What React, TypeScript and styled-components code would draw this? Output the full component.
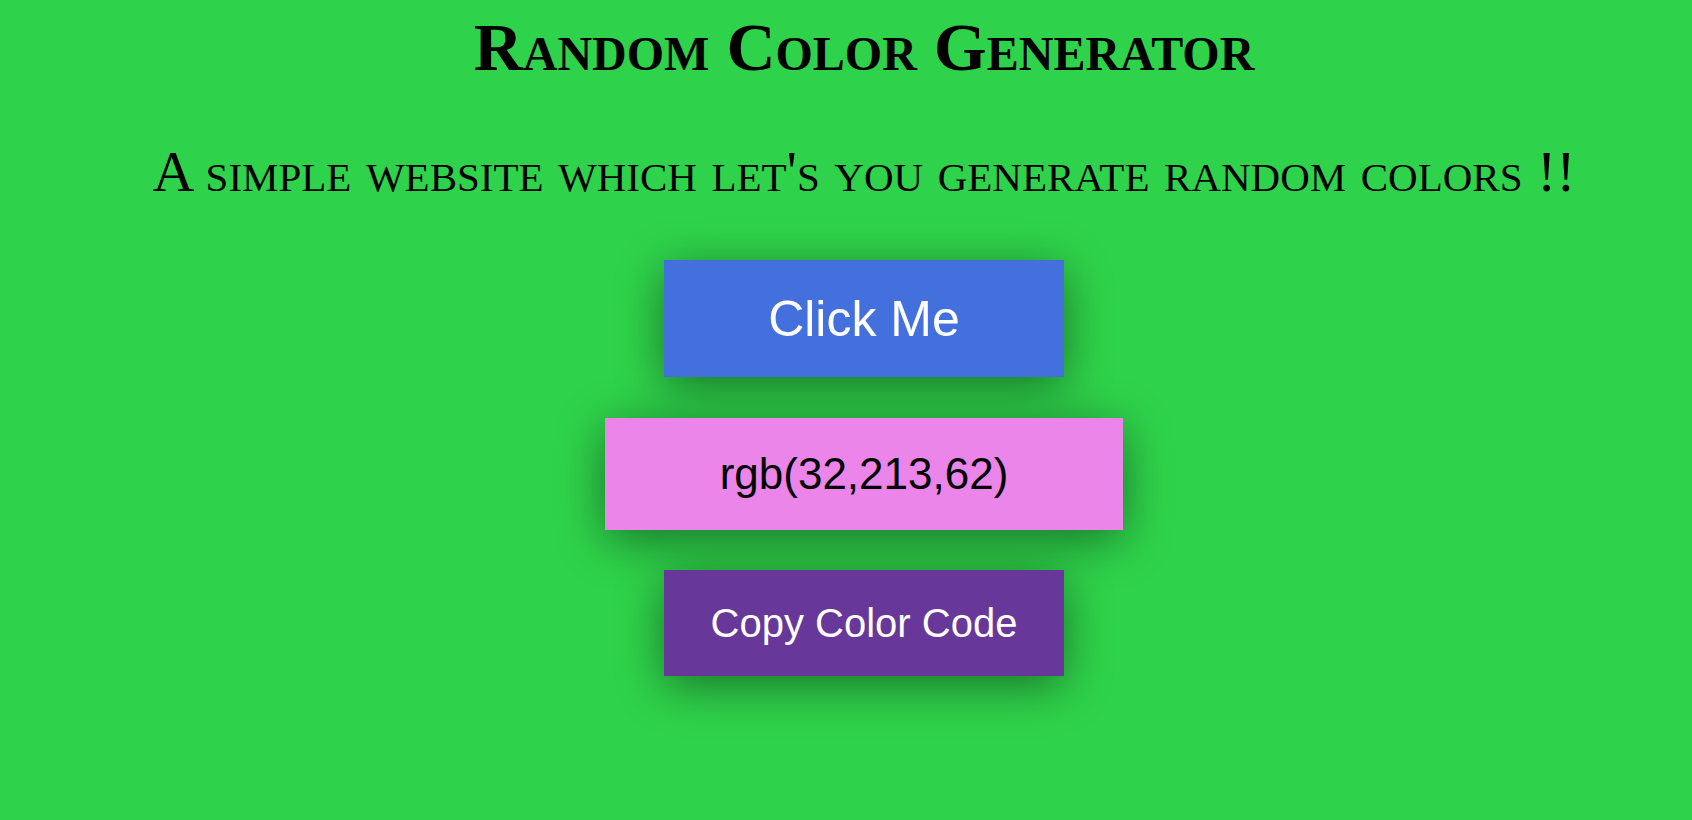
import React from "react";
import styled, { createGlobalStyle } from "styled-components";

const GlobalStyle = createGlobalStyle`
  html, body {
    margin: 0;
    padding: 0;
    background: #2fd34b;
  }
  body {
    font-family: "Liberation Serif", "Times New Roman", serif;
  }
`;

const Page = styled.main`
  box-sizing: border-box;
  width: 100%;
  min-height: 820px;
  padding: 7px 0 0 36px;
  display: flex;
  flex-direction: column;
  align-items: center;
  background: #2fd34b;
`;

const Title = styled.h1`
  margin: 0;
  font-family: "Liberation Serif", "Times New Roman", serif;
  font-size: 68px;
  line-height: 80px;
  font-weight: 700;
  font-variant: small-caps;
  color: #000;
  text-align: center;
  white-space: nowrap;
`;

const Subtitle = styled.h2`
  margin: 50px 0 0;
  font-family: "Liberation Serif", "Times New Roman", serif;
  font-size: 58px;
  line-height: 70px;
  font-weight: 400;
  font-variant: small-caps;
  color: #000;
  text-align: center;
  white-space: nowrap;
`;

const Controls = styled.div`
  margin-top: 53px;
  display: flex;
  flex-direction: column;
  align-items: center;
  gap: 40px;
`;

const Block = styled.div<{ $w: number; $h: number; $bg: string; $fg: string; $fs: number }>`
  box-sizing: border-box;
  width: ${(p) => p.$w}px;
  height: ${(p) => p.$h}px;
  display: flex;
  align-items: center;
  justify-content: center;
  background: ${(p) => p.$bg};
  color: ${(p) => p.$fg};
  font-family: "Liberation Sans", Arial, sans-serif;
  font-size: ${(p) => p.$fs}px;
  box-shadow: 0 10px 48px rgba(0, 0, 0, 0.45);
  border: none;
  padding: 0;
`;

const ActionButton = styled(Block).attrs({ as: "button" })`
  cursor: pointer;
`;

const ColorCode = styled(Block)`
  margin-top: 1px;
`;

export default function App() {
  return (
    <>
      <GlobalStyle />
      <Page>
        <Title>Random Color Generator</Title>
        <Subtitle>A simple website which let's you generate random colors !!</Subtitle>
        <Controls>
          <ActionButton $w={400} $h={117} $bg="#4470de" $fg="#fff" $fs={50}>
            Click Me
          </ActionButton>
          <ColorCode $w={518} $h={112} $bg="#eb85ea" $fg="#000" $fs={44}>
            rgb(32,213,62)
          </ColorCode>
          <ActionButton $w={400} $h={106} $bg="#673799" $fg="#fff" $fs={40}>
            Copy Color Code
          </ActionButton>
        </Controls>
      </Page>
    </>
  );
}
